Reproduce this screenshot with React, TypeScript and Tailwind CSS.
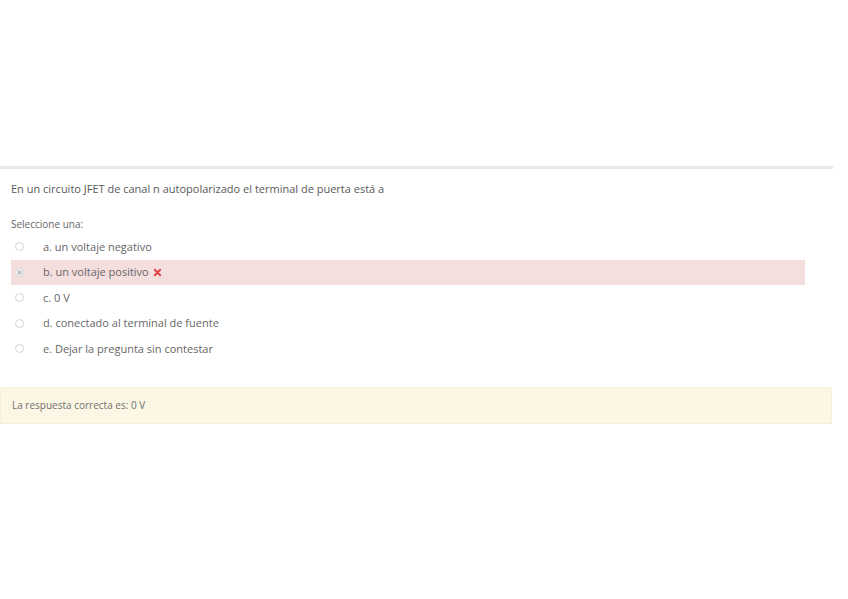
const options = [
  { label: "a. un voltaje negativo" },
  { label: "b. un voltaje positivo", wrong: true },
  { label: "c. 0 V" },
  { label: "d. conectado al terminal de fuente" },
  { label: "e. Dejar la pregunta sin contestar" },
];

function Radio({ checked }: { checked?: boolean }) {
  return (
    <span className="flex h-[9px] w-[9px] items-center justify-center rounded-full border border-[#d4d4d4] bg-white">
      {checked && <span className="h-[5px] w-[5px] rounded-full bg-[#c8c8c8]" />}
    </span>
  );
}

export default function App() {
  return (
    <div className="h-[599px] w-[848px] bg-white font-['Open_Sans',sans-serif] text-[#666]">
      <div className="h-[166px]" />
      <div className="h-[3px] w-[833px] bg-[#e9e9e9]" />

      <p className="mt-[13px] pl-[11px] text-[11px] leading-[14px] text-[#5a5a5a]">
        En un circuito JFET de canal n autopolarizado el terminal de puerta está a
      </p>

      <p className="mt-[22px] pl-[11px] text-[10px] leading-[12px] text-[#666]">Seleccione una:</p>

      <div className="mt-[4px] flex w-[805px] flex-col">
        {options.map((o) => (
          <div
            key={o.label}
            className={
              "ml-[11px] flex h-[25.5px] items-center " + (o.wrong ? "bg-[#f5dede]" : "")
            }
          >
            <span className="ml-[4px] w-[28px]">
              <Radio checked={o.wrong} />
            </span>
            <span className="flex items-center text-[11px] leading-[14px] text-[#666]">
              {o.label}
              {o.wrong && (
                <svg viewBox="0 0 10 10" className="ml-[4px] h-[9px] w-[9px]">
                  <path d="M2 2 L8 8 M8 2 L2 8" stroke="#e0413f" strokeWidth="2.2" strokeLinecap="round" />
                </svg>
              )}
            </span>
          </div>
        ))}
      </div>

      <div className="mt-[25px] flex h-[37px] w-[832px] items-center border border-[#f7efd8] bg-[#fcf6e5] pl-[11px]">
        <span className="text-[10px] text-[#707070]">La respuesta correcta es: 0 V</span>
      </div>
    </div>
  );
}
